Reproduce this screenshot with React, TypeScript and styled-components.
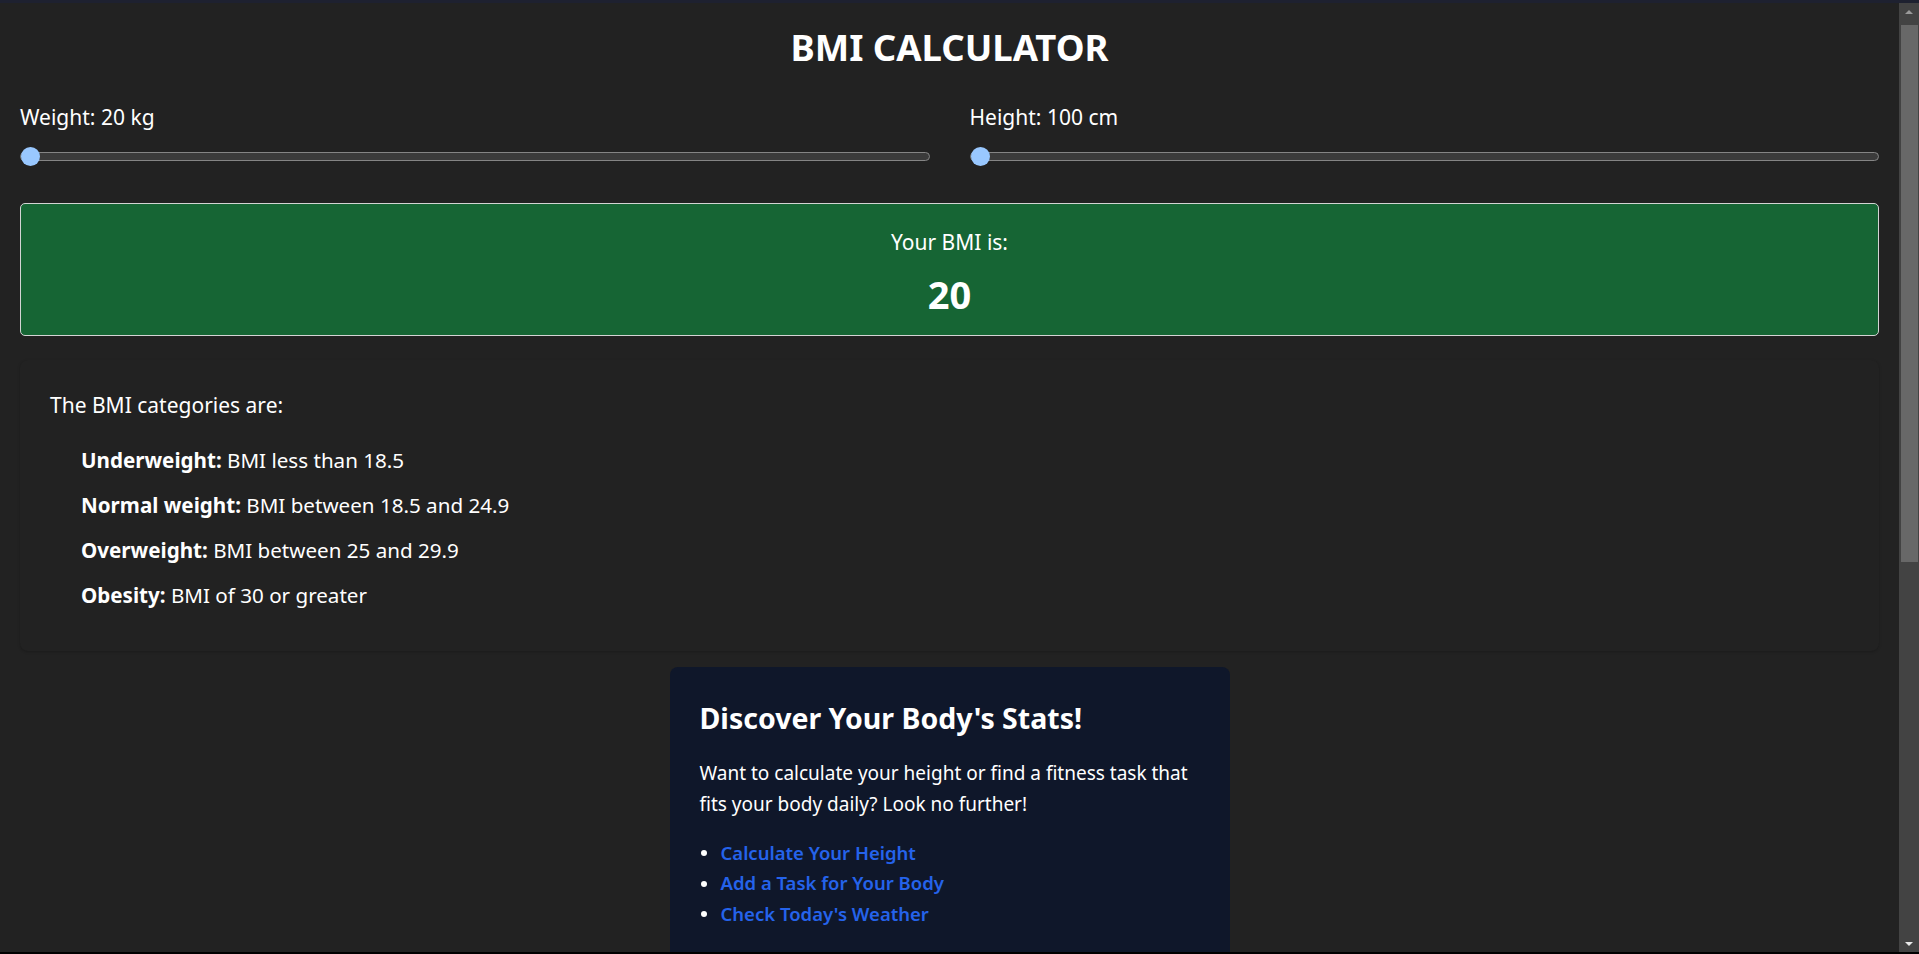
import React from "react";
import styled, { createGlobalStyle } from "styled-components";

const GlobalStyle = createGlobalStyle`
  html, body {
    margin: 0;
    padding: 0;
    height: 100%;
    overflow: hidden;
    background: #222222;
    color-scheme: dark;
  }
  body {
    border-top: 3px solid #1e2130;
    box-sizing: border-box;
    font-family: "Noto Sans", "Open Sans", sans-serif;
    color: #ffffff;
  }
  #root { height: 100%; }
`;

const Frame = styled.div`
  display: flex;
  height: calc(100vh - 5px);
  border-bottom: 2px solid #000;
  background: #222222;
`;

const Content = styled.div`
  flex: 1;
  min-width: 0;
  overflow: hidden;
`;

const ScrollTrack = styled.div`
  width: 20px;
  flex: none;
  display: flex;
  flex-direction: column;
  align-items: center;
  background: #434343;
`;

const ScrollArrow = styled.div<{ $down?: boolean; $dim?: boolean }>`
  height: 17px;
  width: 100%;
  display: flex;
  align-items: center;
  justify-content: center;
  &::before {
    content: "";
    width: 0;
    height: 0;
    border-left: 4px solid transparent;
    border-right: 4px solid transparent;
    ${(p) =>
      p.$down
        ? `border-top: 4px solid ${p.$dim ? "#9a9a9a" : "#e8e8e8"};`
        : `border-bottom: 4px solid ${p.$dim ? "#9a9a9a" : "#e8e8e8"};`}
  }
`;

const ScrollThumbArea = styled.div`
  flex: 1;
  width: 100%;
  padding: 5px 1px 0 2px;
  box-sizing: border-box;
`;

const ScrollThumb = styled.div`
  width: 100%;
  background: #686868;
`;

const Page = styled.main`
  padding: 24px 20px 0;
`;

const Title = styled.h1`
  margin: 0;
  text-align: center;
  font-size: 36.5px;
  line-height: 40px;
  font-weight: 700;
`;

const SliderRow = styled.section`
  display: grid;
  grid-template-columns: 1fr 1fr;
  gap: 40px;
  margin-top: 36px;
`;

const SliderField = styled.label`
  display: flex;
  flex-direction: column;
  gap: 16px;
`;

const FieldLabel = styled.span`
  font-size: 21px;
  line-height: 28px;
`;

const Range = styled.input`
  -webkit-appearance: none;
  appearance: none;
  width: 100%;
  margin: 0;
  height: 19px;
  background: transparent;

  &::-webkit-slider-runnable-track {
    height: 9px;
    box-sizing: border-box;
    background: #3b3b3b;
    border: 1px solid #858585;
    border-radius: 5px;
  }
  &::-webkit-slider-thumb {
    -webkit-appearance: none;
    appearance: none;
    width: 19px;
    height: 19px;
    margin-top: -6px;
    border-radius: 50%;
    background: #99c8ff;
    border: none;
  }
`;

const ResultBox = styled.section`
  margin-top: 37px;
  background: #166534;
  border: 1px solid #d4d4d4;
  border-radius: 5px;
  padding: 24px 20px 23px;
  text-align: center;
`;

const ResultLabel = styled.p`
  margin: 0;
  font-size: 21px;
  line-height: 28px;
`;

const ResultValue = styled.p`
  margin: 20px 0 0;
  font-size: 38px;
  line-height: 36px;
  font-weight: 700;
`;

const CategoriesCard = styled.section`
  margin-top: 24px;
  padding: 30px 30px 41px;
  border-radius: 8px;
  background: #222222;
  box-shadow: 0 1px 3px rgba(0, 0, 0, 0.22);
`;

const Intro = styled.p`
  margin: 0;
  font-size: 21px;
  line-height: 30px;
`;

const CategoryList = styled.ul`
  list-style: none;
  margin: 25px 0 0;
  padding: 0 0 0 31px;
  display: flex;
  flex-direction: column;
  gap: 15px;
`;

const CategoryItem = styled.li`
  font-size: 20.6px;
  line-height: 30px;
  strong { font-weight: 700; }
`;

const DiscoverCard = styled.aside`
  width: 560px;
  box-sizing: border-box;
  margin: 16px auto 0;
  padding: 34px 30px 40px;
  background: #0f172a;
  border-radius: 8px;
`;

const DiscoverTitle = styled.h2`
  margin: 0;
  font-size: 28.5px;
  line-height: 34px;
  font-weight: 700;
`;

const DiscoverText = styled.p`
  margin: 23px 0 0;
  font-size: 19px;
  line-height: 31px;
`;

const LinkList = styled.ul`
  list-style: none;
  margin: 17.5px 0 0;
  padding: 0;
`;

const LinkItem = styled.li`
  display: flex;
  align-items: center;
  font-size: 18.5px;
  line-height: 30.5px;
  &::before {
    content: "";
    flex: none;
    width: 6px;
    height: 6px;
    margin: 1px 14px 0 1px;
    border-radius: 50%;
    background: #ffffff;
  }
`;

const NavLink = styled.a`
  color: #2563eb;
  font-weight: 600;
  text-decoration: none;
`;

const categories = [
  { name: "Underweight:", text: "BMI less than 18.5" },
  { name: "Normal weight:", text: "BMI between 18.5 and 24.9" },
  { name: "Overweight:", text: "BMI between 25 and 29.9" },
  { name: "Obesity:", text: "BMI of 30 or greater" },
];

const links = ["Calculate Your Height", "Add a Task for Your Body", "Check Today's Weather"];

export default function App() {
  const [weight, setWeight] = React.useState(20);
  const [height, setHeight] = React.useState(100);
  const bmi = Math.round(weight / Math.pow(height / 100, 2));

  return (
    <>
      <GlobalStyle />
      <Frame>
        <Content>
          <Page>
            <Title>BMI CALCULATOR</Title>
            <SliderRow>
              <SliderField>
                <FieldLabel>Weight: {weight} kg</FieldLabel>
                <Range
                  type="range"
                  min={20}
                  max={200}
                  value={weight}
                  onChange={(e) => setWeight(Number(e.target.value))}
                />
              </SliderField>
              <SliderField>
                <FieldLabel>Height: {height} cm</FieldLabel>
                <Range
                  type="range"
                  min={100}
                  max={250}
                  value={height}
                  onChange={(e) => setHeight(Number(e.target.value))}
                />
              </SliderField>
            </SliderRow>
            <ResultBox>
              <ResultLabel>Your BMI is:</ResultLabel>
              <ResultValue>{bmi}</ResultValue>
            </ResultBox>
            <CategoriesCard>
              <Intro>The BMI categories are:</Intro>
              <CategoryList>
                {categories.map((c) => (
                  <CategoryItem key={c.name}>
                    <strong>{c.name}</strong> {c.text}
                  </CategoryItem>
                ))}
              </CategoryList>
            </CategoriesCard>
            <DiscoverCard>
              <DiscoverTitle>Discover Your Body's Stats!</DiscoverTitle>
              <DiscoverText>
                Want to calculate your height or find a fitness task that fits your body daily? Look no further!
              </DiscoverText>
              <LinkList>
                {links.map((l) => (
                  <LinkItem key={l}>
                    <NavLink href="#">{l}</NavLink>
                  </LinkItem>
                ))}
              </LinkList>
            </DiscoverCard>
          </Page>
        </Content>
        <ScrollTrack aria-hidden="true">
          <ScrollArrow $dim />
          <ScrollThumbArea>
            <ScrollThumb style={{ height: "537px" }} />
          </ScrollThumbArea>
          <ScrollArrow $down />
        </ScrollTrack>
      </Frame>
    </>
  );
}
